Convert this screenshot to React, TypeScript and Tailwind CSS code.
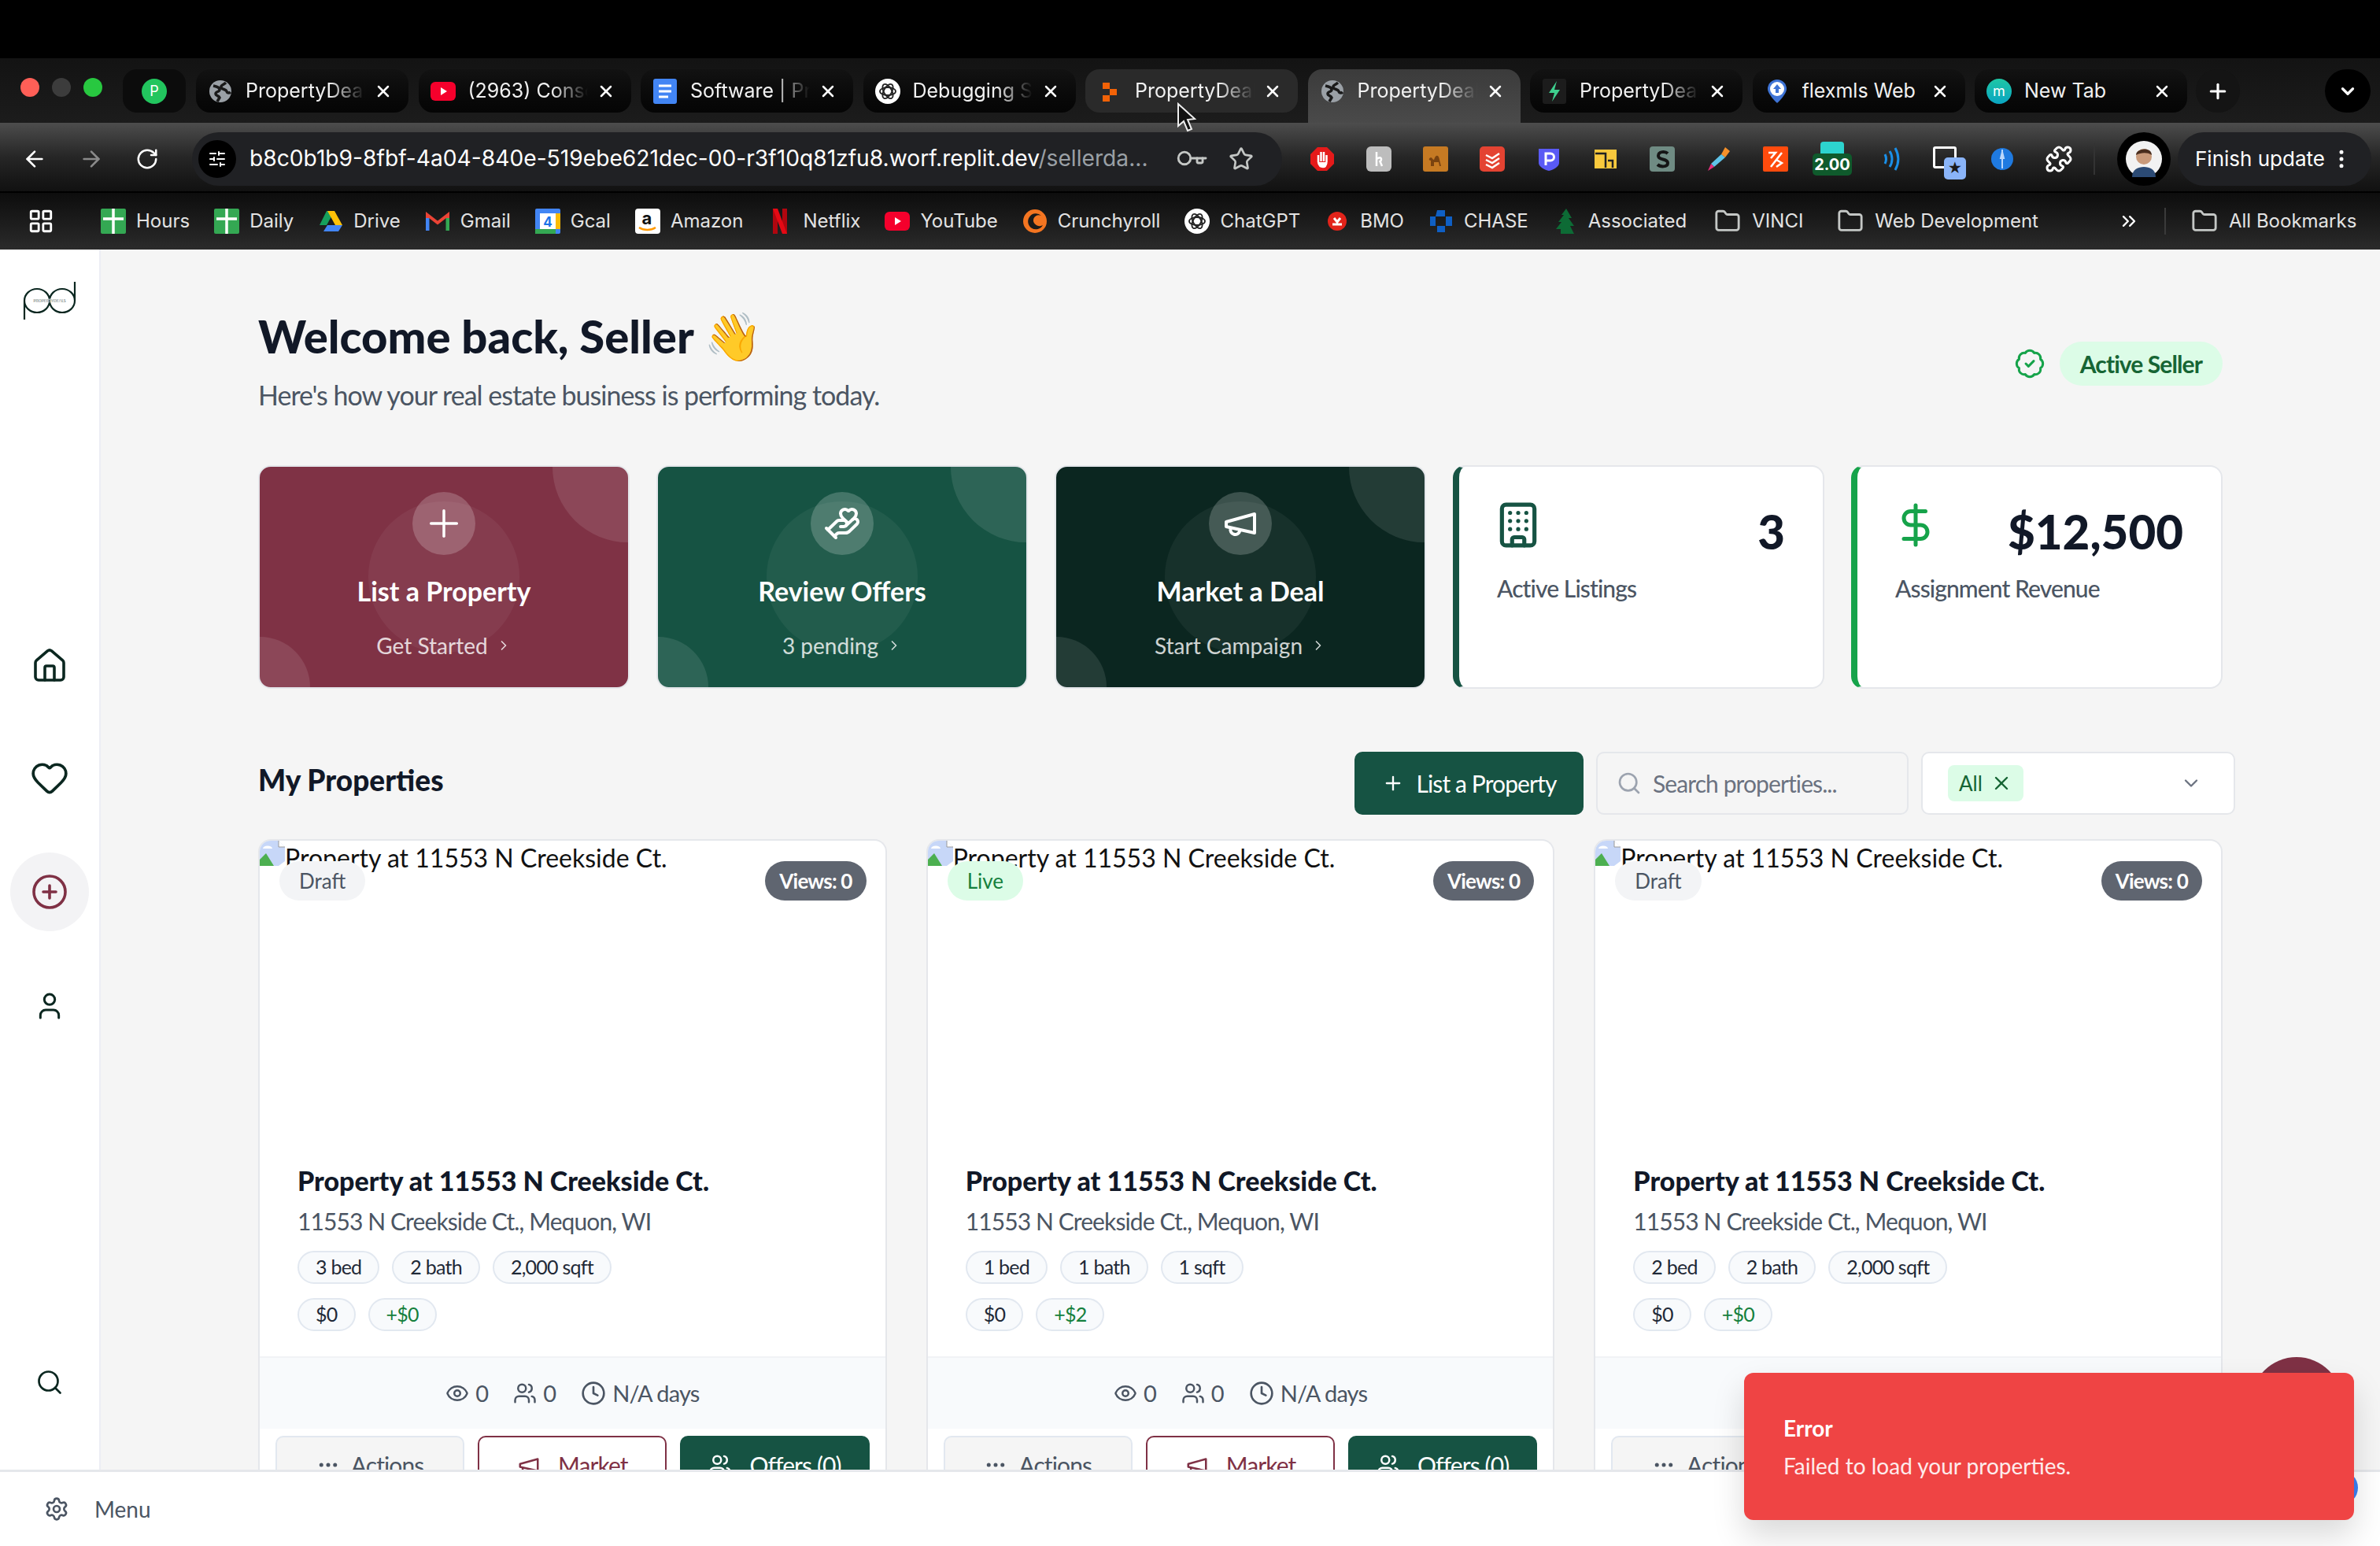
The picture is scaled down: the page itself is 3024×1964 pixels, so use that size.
import React from 'react';
import { House, Heart, CirclePlus, User, Search, Settings, Building, DollarSign, HandHeart, Plus, ChevronRight, ChevronDown, X, Eye, Users, Clock, Ellipsis, BadgeCheck, Key, Star, ArrowLeft, ArrowRight, RotateCw, EllipsisVertical, Puzzle, LayoutGrid, Folder, ChevronsRight, SlidersHorizontal } from 'lucide-react';

const chromeFont = 'font-["Inter","Liberation_Sans",sans-serif]';
const heading = 'font-["Lato",sans-serif] font-black';
const tight = 'tracking-[-0.03em]';

const Megaphone = ({ size }: { size: number }) => (
  <svg width={size} height={size} viewBox="0 0 24 24" fill="none" stroke="currentColor" strokeWidth="2" strokeLinecap="round" strokeLinejoin="round">
    <path d="m3 11 18-5v12L3 14v-3z" />
    <path d="M11.600 16.800a3 3 0 1 1-5.800-1.600" />
  </svg>
);

const Globe = () => (
  <svg width="30" height="30" viewBox="0 0 30 30"><circle cx="15" cy="15" r="14" fill="#9aa0a6" /><path d="M6 8c5 1 8 2 8 5s-5 2-5 5 4 2 5 5l-3 5M22 4c-3 3-7 3-6 6s6 2 7 5 4 2 5 1" stroke="#1a1a1a" strokeWidth="3.500" fill="none" /></svg>
);
const Yt = () => <svg width="32" height="24" viewBox="0 0 32 24"><rect width="32" height="24" rx="6" fill="#f5002c" /><path d="M13 7l8 5-8 5z" fill="#fff" /></svg>;
const Docs = () => <svg width="30" height="32" viewBox="0 0 30 32"><rect width="30" height="32" rx="3" fill="#4285f4" /><path d="M7 9h16M7 16h16M7 23h12" stroke="#fff" strokeWidth="3" /></svg>;
const Gpt = () => <svg width="32" height="32" viewBox="0 0 32 32"><circle cx="16" cy="16" r="16" fill="#fff" /><g stroke="#222" strokeWidth="1.800" fill="none"><ellipse cx="16" cy="16" rx="10" ry="5" /><ellipse cx="16" cy="16" rx="10" ry="5" transform="rotate(60 16 16)" /><ellipse cx="16" cy="16" rx="10" ry="5" transform="rotate(120 16 16)" /></g></svg>;
const Sq = () => <svg width="30" height="30" viewBox="0 0 30 30"><path d="M6 4h9v8H6zM15 12h9v8h-9zM6 20h9v8H6z" fill="#f26207" /></svg>;
const Bolt = () => <svg width="30" height="32" viewBox="0 0 30 32"><rect width="30" height="32" rx="3" fill="#1c1c1c" /><path d="M18 3L8 18h7l-3 11 10-15h-7z" fill="#3ecf8e" /></svg>;
const Pin = () => <svg width="30" height="32" viewBox="0 0 30 32"><path d="M15 1a12 12 0 0 1 12 12c0 7-12 18-12 18S3 20 3 13A12 12 0 0 1 15 1z" fill="#3f74d6" /><circle cx="15" cy="13" r="9" fill="#fff" /><path d="M15 7l5 6h-3v5h-4v-5h-3z" fill="#3f74d6" /></svg>;
const Badge = ({ bg, t }: { bg: string; t: string }) => (
  <span className="flex h-[32px] w-[32px] items-center justify-center rounded-full text-[18px] text-white" style={{ background: bg }}>{t}</span>
);

const tabs = [
  { icon: <Globe />, label: 'PropertyDeals' },
  { icon: <Yt />, label: '(2963) Console' },
  { icon: <Docs />, label: 'Software | Prod' },
  { icon: <Gpt />, label: 'Debugging Ses' },
  { icon: <Sq />, label: 'PropertyDeals', hover: true },
  { icon: <Globe />, label: 'PropertyDeals', active: true },
  { icon: <Bolt />, label: 'PropertyDeals' },
  { icon: <Pin />, label: 'flexmls Web', nofade: true },
  { icon: <Badge bg="linear-gradient(#1ec7a5,#0aa5c2)" t="m" />, label: 'New Tab', nofade: true },
];

function Tab({ t }: { t: (typeof tabs)[number] }) {
  const bg = t.active
    ? 'bg-gradient-to-b from-[#3b3b3b] to-[#4a4a4a] h-[68px] rounded-b-none pb-[13px]'
    : t.hover
      ? 'bg-[#2a2a2a] h-[55px]'
      : 'bg-gradient-to-b from-[#121212] to-[#050505] h-[55px]';
  return (
    <div className={`flex w-[270px] shrink-0 items-center self-start rounded-[18px] pl-[15px] ${bg}`}>
      <div className="flex w-[32px] justify-center">{t.icon}</div>
      <span className={`ml-[16px] w-[152px] overflow-hidden whitespace-nowrap text-[25px] text-[#f1f1f1] ${t.nofade ? '' : '[mask-image:linear-gradient(to_right,black_70%,transparent)]'}`}>{t.label}</span>
      <X size={24} strokeWidth={2.500} className="ml-[11px] text-white" />
    </div>
  );
}

const Ext = ({ children }: { children: React.ReactNode }) => (
  <div className="relative flex w-[72px] shrink-0 items-center justify-center">{children}</div>
);

const extensions = [
  <svg width="32" height="32" viewBox="0 0 32 32"><path d="M10 1h12l9 9v12l-9 9H10l-9-9V10z" fill="#e51a1a" /><path d="M11 20v-9m3.500 8V7m3.500 12V7m3.500 13v-9M11 20c1 5 4 6 6 6 3 0 4-2 4.500-6" stroke="#fff" strokeWidth="2.500" fill="#fff" /></svg>,
  <svg width="32" height="32" viewBox="0 0 32 32"><rect width="32" height="32" rx="6" fill="#bdbdbd" /><path d="M13 7v18M13 16c6-4 7 0 5 3m-1-1l3 7" stroke="#fff" strokeWidth="2.500" fill="none" /></svg>,
  <svg width="32" height="32" viewBox="0 0 32 32"><rect width="32" height="32" rx="3" fill="#c67a23" /><path d="M10 25v-7c-3 0-3-3 0-4 2 0 2 3 4 3 2-7 6-7 7 0l2 8h-2l-1-5h-6v5z" fill="#7a4310" /></svg>,
  <svg width="32" height="32" viewBox="0 0 32 32"><rect width="32" height="32" rx="5" fill="#e44332" /><path d="M8 11l8 4 9-6M8 17l8 4 9-6M8 23l8 4 9-6" stroke="#fff" strokeWidth="2.500" fill="none" /></svg>,
  <svg width="32" height="32" viewBox="0 0 32 32"><path d="M3 3h26v18c0 5-8 9-13 10C11 30 3 26 3 21z" fill="#5a5af5" /><path d="M12 24V9h6a4 4 0 0 1 0 9h-6" stroke="#fff" strokeWidth="3" fill="none" /></svg>,
  <svg width="28" height="24" viewBox="0 0 28 24"><rect width="28" height="24" fill="#f9c93d" /><path d="M1 5h13v18M17 14h6v9" stroke="#222" strokeWidth="2.500" fill="none" /></svg>,
  <svg width="32" height="32" viewBox="0 0 32 32"><rect width="32" height="32" rx="4" fill="#6f8b83" /><path d="M23 9c-3-3-12-3-12 3s12 3 12 9-10 5-13 2" stroke="#151515" strokeWidth="4" fill="none" /></svg>,
  <svg width="32" height="32" viewBox="0 0 32 32"><path d="M24 1l6 5-6 8-5-4z" fill="#f5902a" /><path d="M19 10l5 4L10 26l-4-4z" fill="#5fc3e8" /><path d="M6 22l4 4-8 5z" fill="#e62e7a" /></svg>,
  <svg width="32" height="32" viewBox="0 0 32 32"><rect width="32" height="32" rx="2" fill="#ff4b0d" /><path d="M7 8h9l-6 7M24 8L10 26M17 17l7 4-7 5" stroke="#fff" strokeWidth="2.500" fill="none" /></svg>,
  <div className="relative flex h-[44px] w-[34px] flex-col items-center">
    <div className="h-[18px] w-[30px] rounded-t-[4px] bg-[#2dd4cf]" />
    <span className="absolute top-[15px] flex h-[28px] w-[50px] items-center justify-center rounded-[5px] bg-[#0f5a2c] text-[20px] font-bold text-white">2.00</span>
  </div>,
  <svg width="32" height="32" viewBox="0 0 32 32"><path d="M11 10c2 4 2 8 0 12M17 6c4 6 4 14 0 20M24 2c5 9 5 19 0 28" stroke="#1a8fe8" strokeWidth="3" fill="none" /></svg>,
  <div className="relative h-[32px] w-[32px]">
    <div className="absolute left-0 top-0 h-[28px] w-[30px] rounded-[3px] border-[3px] border-white" />
    <span className="absolute left-[14px] top-[14px] flex h-[28px] w-[28px] items-center justify-center rounded-[5px] bg-[#8ab4f8] text-[18px] text-[#1a1a1a]">★</span>
  </div>,
  <svg width="32" height="32" viewBox="0 0 32 32"><circle cx="16" cy="16" r="14" fill="#1f7ae0" /><path d="M16 4v24M14 15l2-8 2 8z" stroke="#bcd8fb" strokeWidth="2" fill="none" /></svg>,
];

const bookmarks: { icon: React.ReactNode; label: string }[] = [
  { icon: <svg width="32" height="32" viewBox="0 0 32 32"><rect width="32" height="32" rx="2" fill="#34a853" /><path d="M16 0v32M3 13h26" stroke="#fff" strokeWidth="3.500" /></svg>, label: 'Hours' },
  { icon: <svg width="32" height="32" viewBox="0 0 32 32"><rect width="32" height="32" rx="2" fill="#34a853" /><path d="M16 0v32M3 13h26" stroke="#fff" strokeWidth="3.500" /></svg>, label: 'Daily' },
  { icon: <svg width="30" height="30" viewBox="0 0 30 30"><path d="M10 2h10L10 20H1z" fill="#16a05d" /><path d="M20 2l10 18h-9L11 2z" fill="#ffc107" /><path d="M6 28l5-8h19l-5 8z" fill="#4285f4" /></svg>, label: 'Drive' },
  { icon: <svg width="30" height="24" viewBox="0 0 30 24"><path d="M2 22V4l13 10L28 4v18" stroke="#ea4335" strokeWidth="4" fill="none" /><path d="M2 24V8" stroke="#4285f4" strokeWidth="5" /><path d="M28 24V8" stroke="#34a853" strokeWidth="5" /></svg>, label: 'Gmail' },
  { icon: <svg width="32" height="32" viewBox="0 0 32 32"><rect width="32" height="32" rx="2" fill="#4285f4" /><rect x="6" y="6" width="20" height="20" fill="#fff" /><rect y="26" width="26" height="6" fill="#34a853" /><rect x="26" y="6" width="6" height="20" fill="#fbbc04" /><text x="16" y="23" fontSize="17" fontWeight="700" textAnchor="middle" fill="#1a73e8">4</text></svg>, label: 'Gcal' },
  { icon: <svg width="32" height="32" viewBox="0 0 32 32"><rect width="32" height="32" rx="4" fill="#fff" /><text x="15" y="20" fontSize="22" fontWeight="700" textAnchor="middle" fill="#111">a</text><path d="M5 24c6 4 15 4 21 0" stroke="#ff9900" strokeWidth="2.500" fill="none" /></svg>, label: 'Amazon' },
  { icon: <svg width="20" height="32" viewBox="0 0 20 32"><path d="M1 0h6v32l-6 0zM13 0h6v32h-6z" fill="#b1060f" /><path d="M1 0h6l12 32h-6z" fill="#e50914" /></svg>, label: 'Netflix' },
  { icon: <Yt />, label: 'YouTube' },
  { icon: <svg width="32" height="32" viewBox="0 0 32 32"><circle cx="16" cy="16" r="15" fill="#f47521" /><path d="M24 9a10 10 0 1 0 2 12 8 8 0 0 1-12-5 7 7 0 0 1 10-7z" fill="#1a1a1a" /></svg>, label: 'Crunchyroll' },
  { icon: <Gpt />, label: 'ChatGPT' },
  { icon: <svg width="24" height="24" viewBox="0 0 24 24"><circle cx="12" cy="12" r="12" fill="#e2231a" /><path d="M6 16h12M8 8l4 5 4-5" stroke="#fff" strokeWidth="3" fill="none" /></svg>, label: 'BMO' },
  { icon: <svg width="30" height="30" viewBox="0 0 30 30"><path d="M10 1h10v8H8zM21 9h8v12h-8zM10 21h10v8H10zM1 9h7v12H1z" fill="#0f5fc4" /></svg>, label: 'CHASE' },
  { icon: <svg width="24" height="32" viewBox="0 0 24 32"><path d="M13 0l7 12h-4l7 10h-5l5 10H6v-6H0l7-9H3l7-9H7z" fill="#0d6b35" /></svg>, label: 'Associated' },
];

function Chrome() {
  return (
    <div className={`shrink-0 ${chromeFont}`}>
      <div className="h-[74px] bg-black" />
      <div className="relative flex h-[82px] items-start bg-gradient-to-b from-[#131313] to-[#1c1c1c] pt-[14px]">
        <div className="flex w-[156px] shrink-0 items-center gap-[16px] self-stretch pb-[22px] pl-[26px]">
          <span className="h-[24px] w-[24px] rounded-full bg-[#ff5f57]" />
          <span className="h-[24px] w-[24px] rounded-full bg-[#3c3c3c]" />
          <span className="h-[24px] w-[24px] rounded-full bg-[#28c840]" />
        </div>
        <div className="flex h-[55px] w-[80px] shrink-0 items-center justify-center rounded-[18px] bg-[#0c0c0c]">
          <Badge bg="#22c55e" t="P" />
        </div>
        <div className="ml-[13px] flex gap-[12.500px]">
          {tabs.map((t, i) => <Tab key={i} t={t} />)}
        </div>
        <div className="ml-[11px] flex h-[55px] w-[56px] items-center justify-center rounded-full bg-[#141414]">
          <Plus size={30} className="text-white" strokeWidth={2.500} />
        </div>
        <div className="ml-[108px] flex h-[55px] w-[58px] items-center justify-center rounded-full bg-black">
          <ChevronDown size={26} strokeWidth={3} className="text-white" />
        </div>
      </div>
      <div className="flex h-[87px] items-center bg-gradient-to-b from-[#4d4d4d] via-[#262626] to-[#111] pt-[4px]">
        <ArrowLeft size={32} className="ml-[28px] text-white" />
        <ArrowRight size={32} className="ml-[40px] text-[#8a8a8a]" />
        <RotateCw size={30} className="ml-[40px] text-white" />
        <div className="ml-[42px] flex h-[68px] w-[1385px] shrink-0 items-center rounded-full bg-[#202124]">
          <div className="ml-[8px] flex h-[48px] w-[48px] items-center justify-center rounded-full bg-black">
            <SlidersHorizontal size={24} className="text-white" />
          </div>
          <span className="ml-[17px] w-[1146px] overflow-hidden whitespace-nowrap text-[28.200px] text-white">b8c0b1b9-8fbf-4a04-840e-519ebe621dec-00-r3f10q81zfu8.worf.replit.dev<span className="text-[#9aa0a6]">/sellerda...</span></span>
          <Key size={34} className="ml-[33px] rotate-45 text-[#c4c7c5]" />
          <Star size={32} className="ml-[31px] text-[#c4c7c5]" />
        </div>
        <div className="ml-[15px] flex h-[68px] items-center">
          {extensions.map((e, i) => <Ext key={i}>{e}</Ext>)}
          <Ext><Puzzle size={36} className="text-white" /></Ext>
        </div>
        <div className="ml-[8px] h-[40px] w-[2px] bg-[#333]" />
        <div className="ml-[28px] flex h-[68px] w-[68px] items-center justify-center rounded-full bg-black">
          <svg width="46" height="46" viewBox="0 0 46 46"><circle cx="23" cy="23" r="23" fill="#f2f2f2" /><path d="M8 46c0-10 8-13 15-13s15 3 15 13z" fill="#2b4a74" /><circle cx="23" cy="20" r="10" fill="#c99a7a" /><path d="M13 18c0-9 20-11 20 0-6-4-14-3-20 0z" fill="#4a2e1e" /></svg>
        </div>
        <div className="ml-[9px] flex h-[68px] w-[246px] items-center rounded-full bg-[#202124] pl-[22px]">
          <span className="whitespace-nowrap text-[26px] text-white">Finish update</span>
          <EllipsisVertical size={30} className="ml-[6px] text-white" />
        </div>
      </div>
      <div className="flex h-[74px] items-center border-t-[2px] border-black bg-gradient-to-b from-[#0d0d0d] to-[#2b2b2b] text-[24px] text-[#e3e3e3]">
        <LayoutGrid size={34} className="ml-[35px] text-white" />
        <div className="ml-[59px] flex items-center">
          {bookmarks.map((b, i) => (
            <div key={i} className="mr-[31px] flex items-center whitespace-nowrap">
              <div className="mr-[13px] flex w-[32px] justify-center">{b.icon}</div>
              {b.label}
            </div>
          ))}
          <div className="ml-[4px] flex items-center">
            <Folder size={34} className="text-[#c4c7c5]" />
            <span className="ml-[14px] w-[109px]">VINCI</span>
            <Folder size={34} className="ml-[-1px] text-[#c4c7c5]" />
            <span className="ml-[14px] whitespace-nowrap">Web Development</span>
          </div>
        </div>
        <ChevronsRight size={28} className="ml-[101px] text-white" />
        <div className="ml-[31px] h-[34px] w-[2px] bg-[#3a3a3a]" />
        <Folder size={34} className="ml-[32px] text-[#c4c7c5]" />
        <span className="ml-[14px] whitespace-nowrap">All Bookmarks</span>
      </div>
    </div>
  );
}

function Logo() {
  return (
    <svg width="68" height="50" viewBox="0 0 68 50" className="shrink-0">
      <g fill="none" stroke="#0b2720" strokeWidth="2.200">
        <path d="M2 49V25a16 15 0 1 1 16 15 16 15 0 0 1-16-15" />
        <path d="M66 1v24a16 15 0 1 1-16-15 16 15 0 0 1 16 15" />
      </g>
      <text x="34" y="27" fontSize="5" fontWeight="700" textAnchor="middle" fill="#0b2720" stroke="#fff" strokeWidth="0.300" fontFamily="Lato">PROPERTYDEALS</text>
    </svg>
  );
}

function Sidebar() {
  const c = 'text-[#0b2720]';
  return (
    <aside className="flex w-[128px] shrink-0 flex-col items-center border-r-[2px] border-[#eceef4] bg-white">
      <div className="mt-[40px]"><Logo /></div>
      <House size={48} strokeWidth={1.800} className={`mt-[415px] ${c}`} />
      <Heart size={50} strokeWidth={1.800} className={`mt-[93px] ${c}`} />
      <div className="mt-[70px] flex h-[100px] w-[100px] items-center justify-center rounded-full bg-[#f3f3f5]">
        <CirclePlus size={48} strokeWidth={1.800} className="text-[#7f3145]" />
      </div>
      <User size={40} strokeWidth={1.800} className={`mt-[75px] ${c}`} />
      <Search size={36} strokeWidth={1.800} className={`mt-[440px] ${c}`} />
    </aside>
  );
}

function ActionCard({ bg, icon, title, sub }: { bg: string; icon: React.ReactNode; title: string; sub: string }) {
  return (
    <div className={`relative flex h-[284px] flex-col items-center overflow-hidden rounded-[16px] border-[2px] border-[#e5e7eb] pt-[32px] ${bg}`}>
      <div className="absolute right-[-96px] top-[-96px] h-[192px] w-[192px] rounded-full bg-white/10" />
      <div className="absolute bottom-[-64px] left-[-64px] h-[128px] w-[128px] rounded-full bg-white/10" />
      <div className="absolute left-1/2 top-1/2 h-[192px] w-[192px] -translate-x-1/2 -translate-y-1/2 rounded-full bg-white/5" />
      <div className="relative flex h-[80px] w-[80px] items-center justify-center rounded-full bg-white/20 text-white">{icon}</div>
      <div className="relative mt-[24px] text-[34px] font-bold leading-[44px] text-white">{title}</div>
      <div className="relative mt-[29px] flex items-center gap-[10px] text-[28px] leading-[36px] text-white/80">
        {sub}<ChevronRight size={20} />
      </div>
    </div>
  );
}

function StatCard({ border, icon, value, label }: { border: string; icon: React.ReactNode; value: string; label: string }) {
  return (
    <div className={`h-[284px] rounded-[16px] border-[2px] border-l-[8px] bg-white px-[48px] pt-[38px] border-y-[#e5e7eb] border-r-[#e5e7eb] ${border}`}>
      <div className="flex h-[72px] items-center justify-between">
        <span className="ml-[-4px]">{icon}</span>
        <span className={`mt-[16px] text-[60px] leading-none text-[#111827] ${heading}`}>{value}</span>
      </div>
      <div className="mt-[24px] text-[30px] font-medium leading-[40px] tracking-[-0.9px] text-[#4b5563]">{label}</div>
    </div>
  );
}

const Chip = ({ children, green }: { children: React.ReactNode; green?: boolean }) => (
  <span className={`flex h-[42px] items-center rounded-full border-[2px] border-[#e2e8f0] bg-[#f8fafc] px-[21px] text-[25px] ${tight} ${green ? 'text-[#15803d]' : 'text-[#1f2937]'}`}>{children}</span>
);

const BrokenImg = () => (
  <svg width="32" height="32" viewBox="0 0 32 32" className="absolute left-0 top-0">
    <path d="M0 0h24l8 8v24H0z" fill="#c7d7f8" />
    <path d="M24 0v8h8" fill="#fff" stroke="#999" strokeWidth="1" />
    <path d="M0 32V24l8-8 10 16z" fill="#4caf50" />
    <path d="M4 10a5 3 0 0 1 12 0z" fill="#fff" />
    <path d="M24 32l8-6v6z" fill="#fff" />
  </svg>
);

function PropertyCard({ status, bed, bath, sqft, plus }: { status: 'Draft' | 'Live'; bed: string; bath: string; sqft: string; plus: string }) {
  const live = status === 'Live';
  return (
    <div className="overflow-hidden rounded-t-[16px] border-[2px] border-b-0 border-[#e5e7eb] bg-white">
      <div className="relative h-[384px]">
        <BrokenImg />
        <div className="pl-[32px] text-[32px] leading-[44px] text-[#111]">Property at 11553 N Creekside Ct.</div>
        <span className={`absolute left-[25px] top-[26px] flex h-[50px] items-center rounded-full px-[25px] text-[26px] ${live ? 'bg-[#dcfce7] text-[#15803d]' : 'bg-[#f3f4f6] text-[#4b5563]'}`}>{status}</span>
        <span className={`absolute right-[24px] top-[26px] flex h-[50px] items-center rounded-full bg-[#5f6570] px-[18px] text-[26px] font-bold text-white ${tight}`}>Views: 0</span>
      </div>
      <div className="h-[271px] px-[48px] pt-[26px]">
        <div className={`text-[34px] leading-[44px] text-[#111827] ${heading}`}>Property at 11553 N Creekside Ct.</div>
        <div className={`mt-[9px] text-[30px] leading-[40px] text-[#4b5563] ${tight}`}>11553 N Creekside Ct., Mequon, WI</div>
        <div className="mt-[18px] flex gap-[16px]"><Chip>{bed}</Chip><Chip>{bath}</Chip><Chip>{sqft}</Chip></div>
        <div className="mt-[18px] flex gap-[16px]"><Chip>$0</Chip><Chip green>{plus}</Chip></div>
      </div>
      <div className={`flex h-[92px] items-center justify-center gap-[32px] border-t-[2px] border-[#f1f3f6] bg-[#f8fafc] text-[29px] text-[#4b5563] ${tight}`}>
        <span className="flex items-center gap-[8px]"><Eye size={30} />0</span>
        <span className="flex items-center gap-[8px]"><Users size={30} />0</span>
        <span className="flex items-center gap-[8px]"><Clock size={32} />N/A days</span>
      </div>
      <div className={`grid grid-cols-3 gap-[17px] px-[20px] pt-[9px] text-[30px] ${tight}`}>
        <span className="flex h-[74px] items-center justify-center gap-[14px] rounded-[10px] border-[2px] border-[#e2e8f0] bg-[#f5f5f5] text-[#4b5563]"><Ellipsis size={30} />Actions</span>
        <span className="flex h-[74px] items-center justify-center gap-[22px] rounded-[10px] border-[2px] border-[#7f3145] bg-white text-[#7f3145]"><Megaphone size={30} />Market</span>
        <span className="flex h-[74px] items-center justify-center gap-[22px] rounded-[10px] bg-[#165343] text-white"><Users size={30} />Offers (0)</span>
      </div>
    </div>
  );
}

export default function App() {
  return (
    <div className={`relative flex h-[1964px] w-[3024px] flex-col overflow-hidden bg-[#f5f5f5] font-["Lato",sans-serif]`}>
      <Chrome />
      <div className="flex min-h-0 flex-1">
        <Sidebar />
        <main className="min-w-0 flex-1 overflow-hidden pl-[200px] pr-[200px] pt-[73px]">
          <div className="flex items-start justify-between">
            <div>
              <h1 className={`text-[58px] leading-[72px] text-[#111827] ${heading}`}>Welcome back, Seller <span className="text-[60px] text-[#f6c24a]">👋</span></h1>
              <p className="mt-[15px] text-[34px] leading-[48px] tracking-[-1px] text-[#4b5563]">Here's how your real estate business is performing today.</p>
            </div>
            <div className="mt-[44px] flex items-center gap-[18px]">
              <BadgeCheck size={40} strokeWidth={1.800} className="text-[#16a34a]" />
              <span className={`flex h-[56px] items-center rounded-full bg-[#dcfce7] px-[26px] text-[30px] font-bold text-[#166534] ${tight}`}>Active Seller</span>
            </div>
          </div>
          <div className="mt-[65px] grid grid-cols-5 gap-[34px]">
            <ActionCard bg="bg-[#7f3245]" icon={<Plus size={56} strokeWidth={1.500} />} title="List a Property" sub="Get Started" />
            <ActionCard bg="bg-[#165343]" icon={<HandHeart size={48} strokeWidth={2} />} title="Review Offers" sub="3 pending" />
            <ActionCard bg="bg-[#0b2620]" icon={<Megaphone size={48} />} title="Market a Deal" sub="Start Campaign" />
            <StatCard border="border-l-[#165343]" icon={<Building size={62} strokeWidth={2} className="text-[#165343]" />} value="3" label="Active Listings" />
            <StatCard border="border-l-[#16a34a]" icon={<DollarSign size={60} strokeWidth={2} className="text-[#16a34a]" />} value="$12,500" label="Assignment Revenue" />
          </div>
          <div className="mr-[-16px] mt-[80px] flex h-[80px] items-center">
            <h2 className={`mr-auto pb-[8px] text-[37px] text-[#111827] ${heading}`}>My Properties</h2>
            <span className={`flex h-[80px] w-[291px] items-center justify-center gap-[16px] rounded-[10px] bg-[#165343] text-[30px] text-white ${tight}`}><Plus size={28} />List a Property</span>
            <div className={`ml-[16px] flex h-[80px] w-[397px] items-center gap-[14px] rounded-[10px] border-[2px] border-[#e5e7eb] bg-[#f5f5f5] pl-[24px] text-[30px] text-[#6b7280] ${tight}`}>
              <Search size={32} className="text-[#9ca3af]" />Search properties...
            </div>
            <div className="ml-[16px] flex h-[80px] w-[399px] items-center justify-between rounded-[10px] border-[2px] border-[#e5e7eb] bg-white pl-[32px] pr-[40px]">
              <span className="flex h-[46px] items-center gap-[10px] rounded-[8px] bg-[#dcfce7] px-[14px] text-[26px] text-[#166534]">All<X size={28} /></span>
              <ChevronDown size={28} className="text-[#6b7280]" />
            </div>
          </div>
          <div className="mt-[31px] grid grid-cols-3 gap-[50px]">
            <PropertyCard status="Draft" bed="3 bed" bath="2 bath" sqft="2,000 sqft" plus="+$0" />
            <PropertyCard status="Live" bed="1 bed" bath="1 bath" sqft="1 sqft" plus="+$2" />
            <PropertyCard status="Draft" bed="2 bed" bath="2 bath" sqft="2,000 sqft" plus="+$0" />
          </div>
        </main>
      </div>
      <footer className="relative flex h-[97px] shrink-0 items-center border-t-[3px] border-[#e5e7eb] bg-white pl-[56px]">
        <Settings size={32} className="text-[#4b5563]" />
        <span className="ml-[32px] text-[28px] text-[#4b5563]">Menu</span>
      </footer>
      <div className="absolute left-[2860px] top-[1724px] h-[120px] w-[116px] rounded-full bg-[#7f3145]" />
      <div className="absolute left-[2950px] top-[1868px] h-[44px] w-[46px] rounded-full bg-[#3b82f6]" />
      <div className="absolute left-[2216px] top-[1744px] flex h-[187px] w-[775px] flex-col justify-center rounded-[12px] bg-[#ef4444] pl-[50px] text-white shadow-[0_20px_40px_rgba(0,0,0,0.15)]">
        <div className="text-[28px] font-bold leading-[40px]">Error</div>
        <div className="mt-[8px] text-[28px] leading-[40px] text-white/90">Failed to load your properties.</div>
      </div>
      <svg width="28" height="40" viewBox="0 0 28 40" className="absolute left-[1495px] top-[130px]">
        <path d="M2 2l0 28 7-6 5 12 5-2-5-12 9-1z" fill="#111" stroke="#eee" strokeWidth="2" />
      </svg>
    </div>
  );
}
